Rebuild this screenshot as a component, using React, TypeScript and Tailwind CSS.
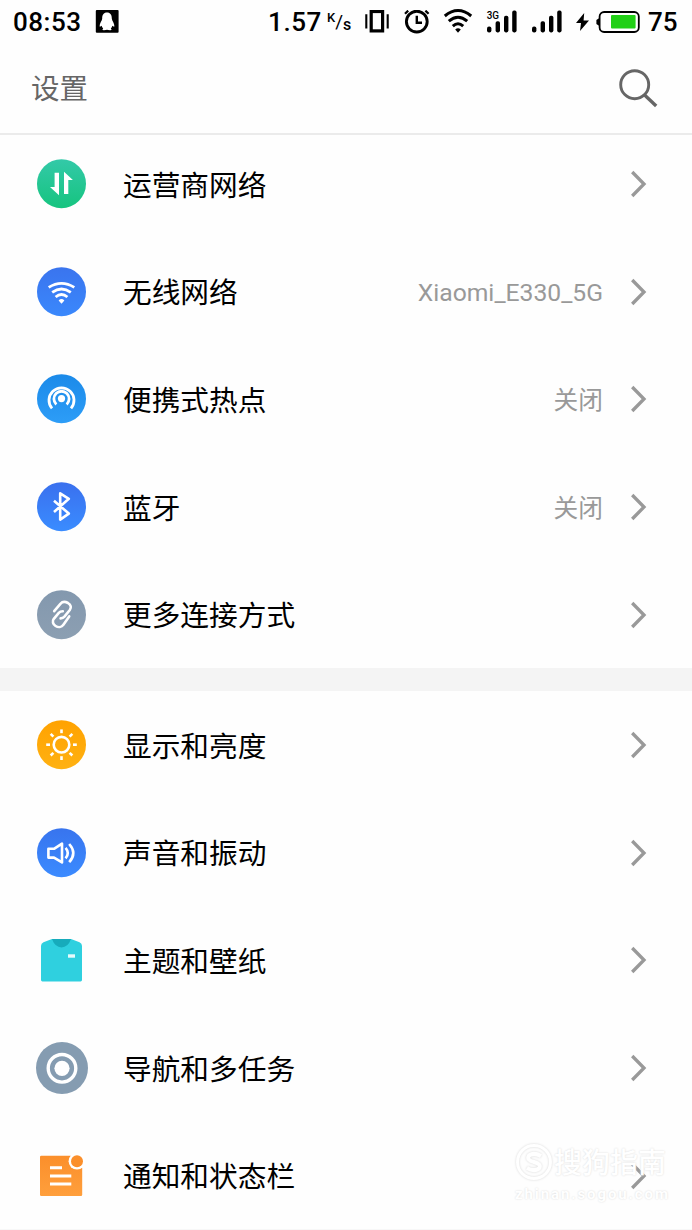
import React from 'react';

interface SettingItem {
  label: string;
  icon: React.ReactNode;
  value?: string;
}

interface BadgeProps {
  id: string;
  from: string;
  to: string;
  children: React.ReactNode;
}

const Badge: React.FC<BadgeProps> = ({ id, from, to, children }) => (
  <svg viewBox="0 0 52 52" className="w-[52px] h-[52px] shrink-0" fill="none">
    <defs>
      <linearGradient id={id} x1="0" y1="0" x2="0" y2="1">
        <stop offset="0" stopColor={from} />
        <stop offset="1" stopColor={to} />
      </linearGradient>
    </defs>
    <circle cx="25.5" cy="25.7" r="24.5" fill={`url(#${id})`} />
    {children}
  </svg>
);

const CarrierIcon = () => (
  <Badge id="carrier" from="#33c9a8" to="#16c47f">
    <path d="M18.6 14.7H23V37.3L14 29H18.6Z" fill="#fff" />
    <path d="M28 36V13.7L36.9 22H32.3V36Z" fill="#fff" />
  </Badge>
);

const WifiBadge = () => (
  <Badge id="wifi" from="#3a74ee" to="#3a88fc">
    <g stroke="#fff" strokeWidth="2.8">
      <path d="M12.7 21.4Q25.5 13.4 38.3 21.4" />
      <path d="M16.2 26.3Q25.5 19.8 34.8 26.3" />
      <path d="M19.6 31Q25.5 26 31.4 31" />
    </g>
    <path d="M22.6 34.4Q25.5 31.8 28.4 34.4L25.5 37.8Z" fill="#fff" />
  </Badge>
);

const HotspotIcon = () => (
  <Badge id="hotspot" from="#1b8ae9" to="#2d9df7">
    <circle cx="25.5" cy="25.6" r="3.6" fill="#fff" />
    <g stroke="#fff" strokeWidth="2.8">
      <path d="M20.3 31.4A7.6 7.6 0 1 1 30.7 31.4" />
      <path d="M16 35.4A12.5 12.5 0 1 1 35 35.4" />
    </g>
  </Badge>
);

const BluetoothIcon = () => (
  <Badge id="bluetooth" from="#3a70ee" to="#3a8cff">
    <path
      d="M18 19.7L32.8 32.6L24.2 38.6V12.4L32.8 17.8L18 31"
      stroke="#fff"
      strokeWidth="2.6"
      strokeLinejoin="round"
    />
  </Badge>
);

const LinkIcon = () => (
  <Badge id="link" from="#8398ae" to="#8c9fb2">
    <g stroke="#fff" strokeWidth="2.6" strokeLinecap="round" strokeLinejoin="round">
      <path d="M18.2 22.2L24.4 14.8C26.2 12.8 29.4 12.6 32 14C35 15.8 35.6 18.6 33.8 21L28.4 27.6Q27 29.2 24.6 29.4" />
      <path d="M33.2 27.4L27.4 35.8C25.6 38.4 22.2 38.6 19.6 37C16.8 35.2 16 32.2 17.8 29.8L22.8 23.8Q24.2 22.2 26.8 22.2" />
    </g>
  </Badge>
);

const BrightnessIcon = () => (
  <Badge id="brightness" from="#ffa200" to="#ffb112">
    <g stroke="#fff" strokeWidth="2.6">
      <circle cx="25.5" cy="25.7" r="7.8" />
      {[0, 45, 90, 135, 180, 225, 270, 315].map(angle => (
        <path key={angle} d="M25.5 14.2V10.4" transform={`rotate(${angle} 25.5 25.7)`} />
      ))}
    </g>
  </Badge>
);

const SoundIcon = () => (
  <Badge id="sound" from="#3874ee" to="#3b8bff">
    <g stroke="#fff" strokeWidth="2.6" strokeLinejoin="round">
      <path d="M12.4 21.8H18L26 16.6V35.4L18 30.6H12.4Z" />
      <path d="M29.6 20.8Q34 26.1 29.6 31.4" />
      <path d="M33.2 17Q41.4 26.1 33.2 35.2" />
    </g>
  </Badge>
);

const ThemeIcon = () => (
  <svg viewBox="0 0 52 52" className="w-[52px] h-[52px] shrink-0">
    <path
      d="M16 5H35L43.5 8.2Q46 9.3 46 12V46Q46 47.4 44.6 47.4H6.4Q5 47.4 5 46V12Q5 9.3 7.5 8.2Z"
      fill="#2fd0df"
    />
    <path d="M16 5H35Q32 13.4 25.5 13.4Q19 13.4 16 5Z" fill="#17abbb" />
    <rect x="32" y="20.3" width="7" height="3.4" fill="#e6fbfc" />
  </svg>
);

const NavigationIcon = () => (
  <svg viewBox="0 0 52 52" className="w-[52px] h-[52px] shrink-0">
    <circle cx="26" cy="26" r="26" fill="#859cb1" />
    <circle cx="26" cy="26.3" r="13.8" fill="none" stroke="#fff" strokeWidth="3.4" />
    <circle cx="26" cy="26.3" r="7.6" fill="#fff" />
  </svg>
);

const NotificationIcon = () => (
  <svg viewBox="0 0 52 52" className="w-[52px] h-[52px] shrink-0">
    <defs>
      <linearGradient id="note" x1="0" y1="0" x2="0" y2="1">
        <stop offset="0" stopColor="#fb8f2b" />
        <stop offset="1" stopColor="#ff9f3c" />
      </linearGradient>
    </defs>
    <rect x="4" y="5.8" width="42.2" height="40.2" rx="1.2" fill="url(#note)" />
    <circle cx="41" cy="11.2" r="8.4" fill="#fff" />
    <circle cx="41" cy="11.2" r="6" fill="#fb8f2b" />
    <path d="M14 17.8H26M14 25.9H35.3M14 34H35.3" stroke="#fff" strokeWidth="3" />
  </svg>
);

const connectionItems: SettingItem[] = [
  { label: '运营商网络', icon: <CarrierIcon /> },
  { label: '无线网络', icon: <WifiBadge />, value: 'Xiaomi_E330_5G' },
  { label: '便携式热点', icon: <HotspotIcon />, value: '关闭' },
  { label: '蓝牙', icon: <BluetoothIcon />, value: '关闭' },
  { label: '更多连接方式', icon: <LinkIcon /> }
];

const deviceItems: SettingItem[] = [
  { label: '显示和亮度', icon: <BrightnessIcon /> },
  { label: '声音和振动', icon: <SoundIcon /> },
  { label: '主题和壁纸', icon: <ThemeIcon /> },
  { label: '导航和多任务', icon: <NavigationIcon /> },
  { label: '通知和状态栏', icon: <NotificationIcon /> }
];

const SignalBars = ({ label }: { label?: string }) => (
  <svg viewBox="0 0 30 24" className="w-[30px] h-6 shrink-0 overflow-visible">
    {label && (
      <text x="-0.3" y="8.6" fontSize="11" fontWeight="500" textLength="12.4" lengthAdjust="spacingAndGlyphs">
        {label}
      </text>
    )}
    <rect x="0" y="16.4" width="4.4" height="6" rx="2" />
    <rect x="8.6" y="11.2" width="4.4" height="11.2" rx="1.8" />
    <rect x="17" y="5.8" width="4.4" height="16.6" rx="1.8" />
    <rect x="25.2" y="0.6" width="4.4" height="21.8" rx="1.8" />
  </svg>
);

const StatusBar = () => (
  <div className="flex h-[43px] items-center pl-[13px] pr-[13px] text-[26px] font-medium text-black">
    <span className="w-[70px] pt-0.5 tracking-[0.5px]">08:53</span>
    <svg viewBox="0 0 24 24" className="ml-[12px] h-6 w-6">
      <rect x="0.8" y="0" width="22.8" height="22.8" rx="1" />
      <path
        d="M12 2.6C8.6 2.6 7.2 5.2 7.2 8.4C7.2 10.6 4.4 13.2 4.6 16.2C4.8 17.2 6 16.2 6.6 15.8Q7 17.4 8.2 18.4Q6.4 20 8.8 20.2Q11.2 20.2 12 19.8Q12.8 20.2 15.2 20.2Q17.6 20 15.8 18.4Q17 17.4 17.4 15.8C18 16.2 19.2 17.2 19.4 16.2C19.6 13.2 16.8 10.6 16.8 8.4C16.8 5.2 15.4 2.6 12 2.6Z"
        fill="#fff"
      />
    </svg>
    <span className="ml-auto pt-0.5 tracking-[0.6px]">1.57</span>
    <span className="ml-[5px] flex w-[24px] items-center leading-none">
      <span className="-mt-[9px] text-[13px]">K</span>
      <span className="text-[19px] font-normal">/</span>
      <span className="mt-[7px] text-[16px]">s</span>
    </span>
    {/* Vibrate */}
    <svg viewBox="0 0 24 24" className="ml-[14px] h-6 w-6" fill="none" stroke="#000">
      <rect x="6.2" y="1.5" width="11.4" height="19.4" strokeWidth="3.2" />
      <path d="M1.3 4.2V18.6M22.7 4.2V18.6" strokeWidth="2.1" />
    </svg>
    {/* Alarm */}
    <svg viewBox="0 0 26 24" className="ml-[15px] h-6 w-[26px]" fill="none" stroke="#000">
      <circle cx="12.8" cy="11.6" r="10.4" strokeWidth="2.9" />
      <path d="M12.8 5.8V12.8H18" strokeWidth="2.4" />
      <path d="M1 3.8L4.2 0.6M21.4 0.6L24.6 3.8" strokeWidth="2.2" />
    </svg>
    <svg viewBox="0 0 28 24" className="ml-[14px] h-6 w-7 overflow-visible" fill="none" stroke="#000" strokeWidth="3">
      <path d="M0.8 6Q14 -5 27.2 6" />
      <path d="M4.8 11.2Q14 3.2 23.2 11.2" />
      <path d="M8.8 16.2Q14 11.4 19.2 16.2" />
      <path d="M11.2 19.6Q14 16.8 16.8 19.6L14 22.8Z" fill="#000" stroke="none" />
    </svg>
    <div className="ml-[15px] flex gap-[15px]">
      <SignalBars label="3G" />
      <SignalBars />
    </div>
    <svg viewBox="0 0 13 18" className="ml-[14px] h-[18px] w-[13px]">
      <path d="M8.2 0L0 10H5L4 18L13 7.4H7.6Z" />
    </svg>
    <svg viewBox="0 0 44 22" className="ml-[7px] h-[22px] w-11">
      <path d="M3.8 6.8L0.4 9V13L3.8 15.2Z" />
      <rect x="3.6" y="1" width="39.2" height="20" rx="4.5" fill="#fff" stroke="#000" strokeWidth="1.8" />
      <rect x="15" y="4" width="24.6" height="13.4" rx="1" fill="#21d016" />
    </svg>
    <span className="ml-[8px] w-[31px] pt-0.5">75</span>
  </div>
);

const Header = () => (
  <header className="flex h-[92px] items-center justify-between border-b-2 border-[#ebebeb] pl-[31px] pr-[33px] pt-0.5">
    <h1 className="pt-[3px] text-[28.5px] leading-none text-[#666]">设置</h1>
    <svg viewBox="0 0 40 40" className="h-10 w-10" fill="none" stroke="#666">
      <circle cx="15.7" cy="15.7" r="14" strokeWidth="2.9" />
      <path d="M25.6 26L37.2 37" strokeWidth="3.4" />
    </svg>
  </header>
);

const SettingRow: React.FC<{ item: SettingItem }> = ({ item }) => (
  <li className="flex h-[107.6px] items-center pl-9 pr-[45px]">
    {item.icon}
    <span className="ml-[35px] flex-1 pt-1 text-[28.7px] leading-none text-black">{item.label}</span>
    {item.value && (
      <span className="pt-1 text-[24.7px] leading-none text-[#999]">{item.value}</span>
    )}
    <svg viewBox="0 0 16 28" className="ml-[28px] h-7 w-4" fill="none" stroke="#999" strokeWidth="3.3">
      <path d="M1.2 2L13 14L1.2 26" />
    </svg>
  </li>
);

const Watermark = () => (
  <div className="pointer-events-none absolute left-[514px] top-[1142px] w-[160px] text-white [text-shadow:0_0_2px_#d8d8d8]">
    <div className="flex items-center">
      <svg viewBox="0 0 40 40" className="h-10 w-10 drop-shadow-[0_0_1px_#d8d8d8]" fill="none" stroke="#fff">
        <circle cx="20" cy="20" r="16.5" strokeWidth="3" />
        <path d="M27 14Q20 10 15 13.5Q12 18 20 20Q28 22 25 26.5Q20 30 13 26" strokeWidth="4" />
      </svg>
      <span className="pt-1 text-[28px] font-medium leading-none whitespace-nowrap">搜狗指南</span>
    </div>
    <div className="ml-[1px] mt-[5px] text-[15px] font-bold leading-none tracking-[1.9px] whitespace-nowrap">
      zhinan.sogou.com
    </div>
  </div>
);

export default function App() {
  return (
    <div className="relative h-[1230px] w-[692px] overflow-hidden bg-[#fefefe] font-[Roboto,'Noto_Sans_CJK_SC',sans-serif]">
      <StatusBar />
      <Header />
      <main>
        <ul className="-mt-[4.6px]">
          {connectionItems.map(item => (
            <SettingRow key={item.label} item={item} />
          ))}
        </ul>
        <div className="h-[23px] bg-[#f4f4f4]" />
        <ul className="border-b border-[#f7f7f7]">
          {deviceItems.map(item => (
            <SettingRow key={item.label} item={item} />
          ))}
        </ul>
      </main>
      <Watermark />
    </div>
  );
}
